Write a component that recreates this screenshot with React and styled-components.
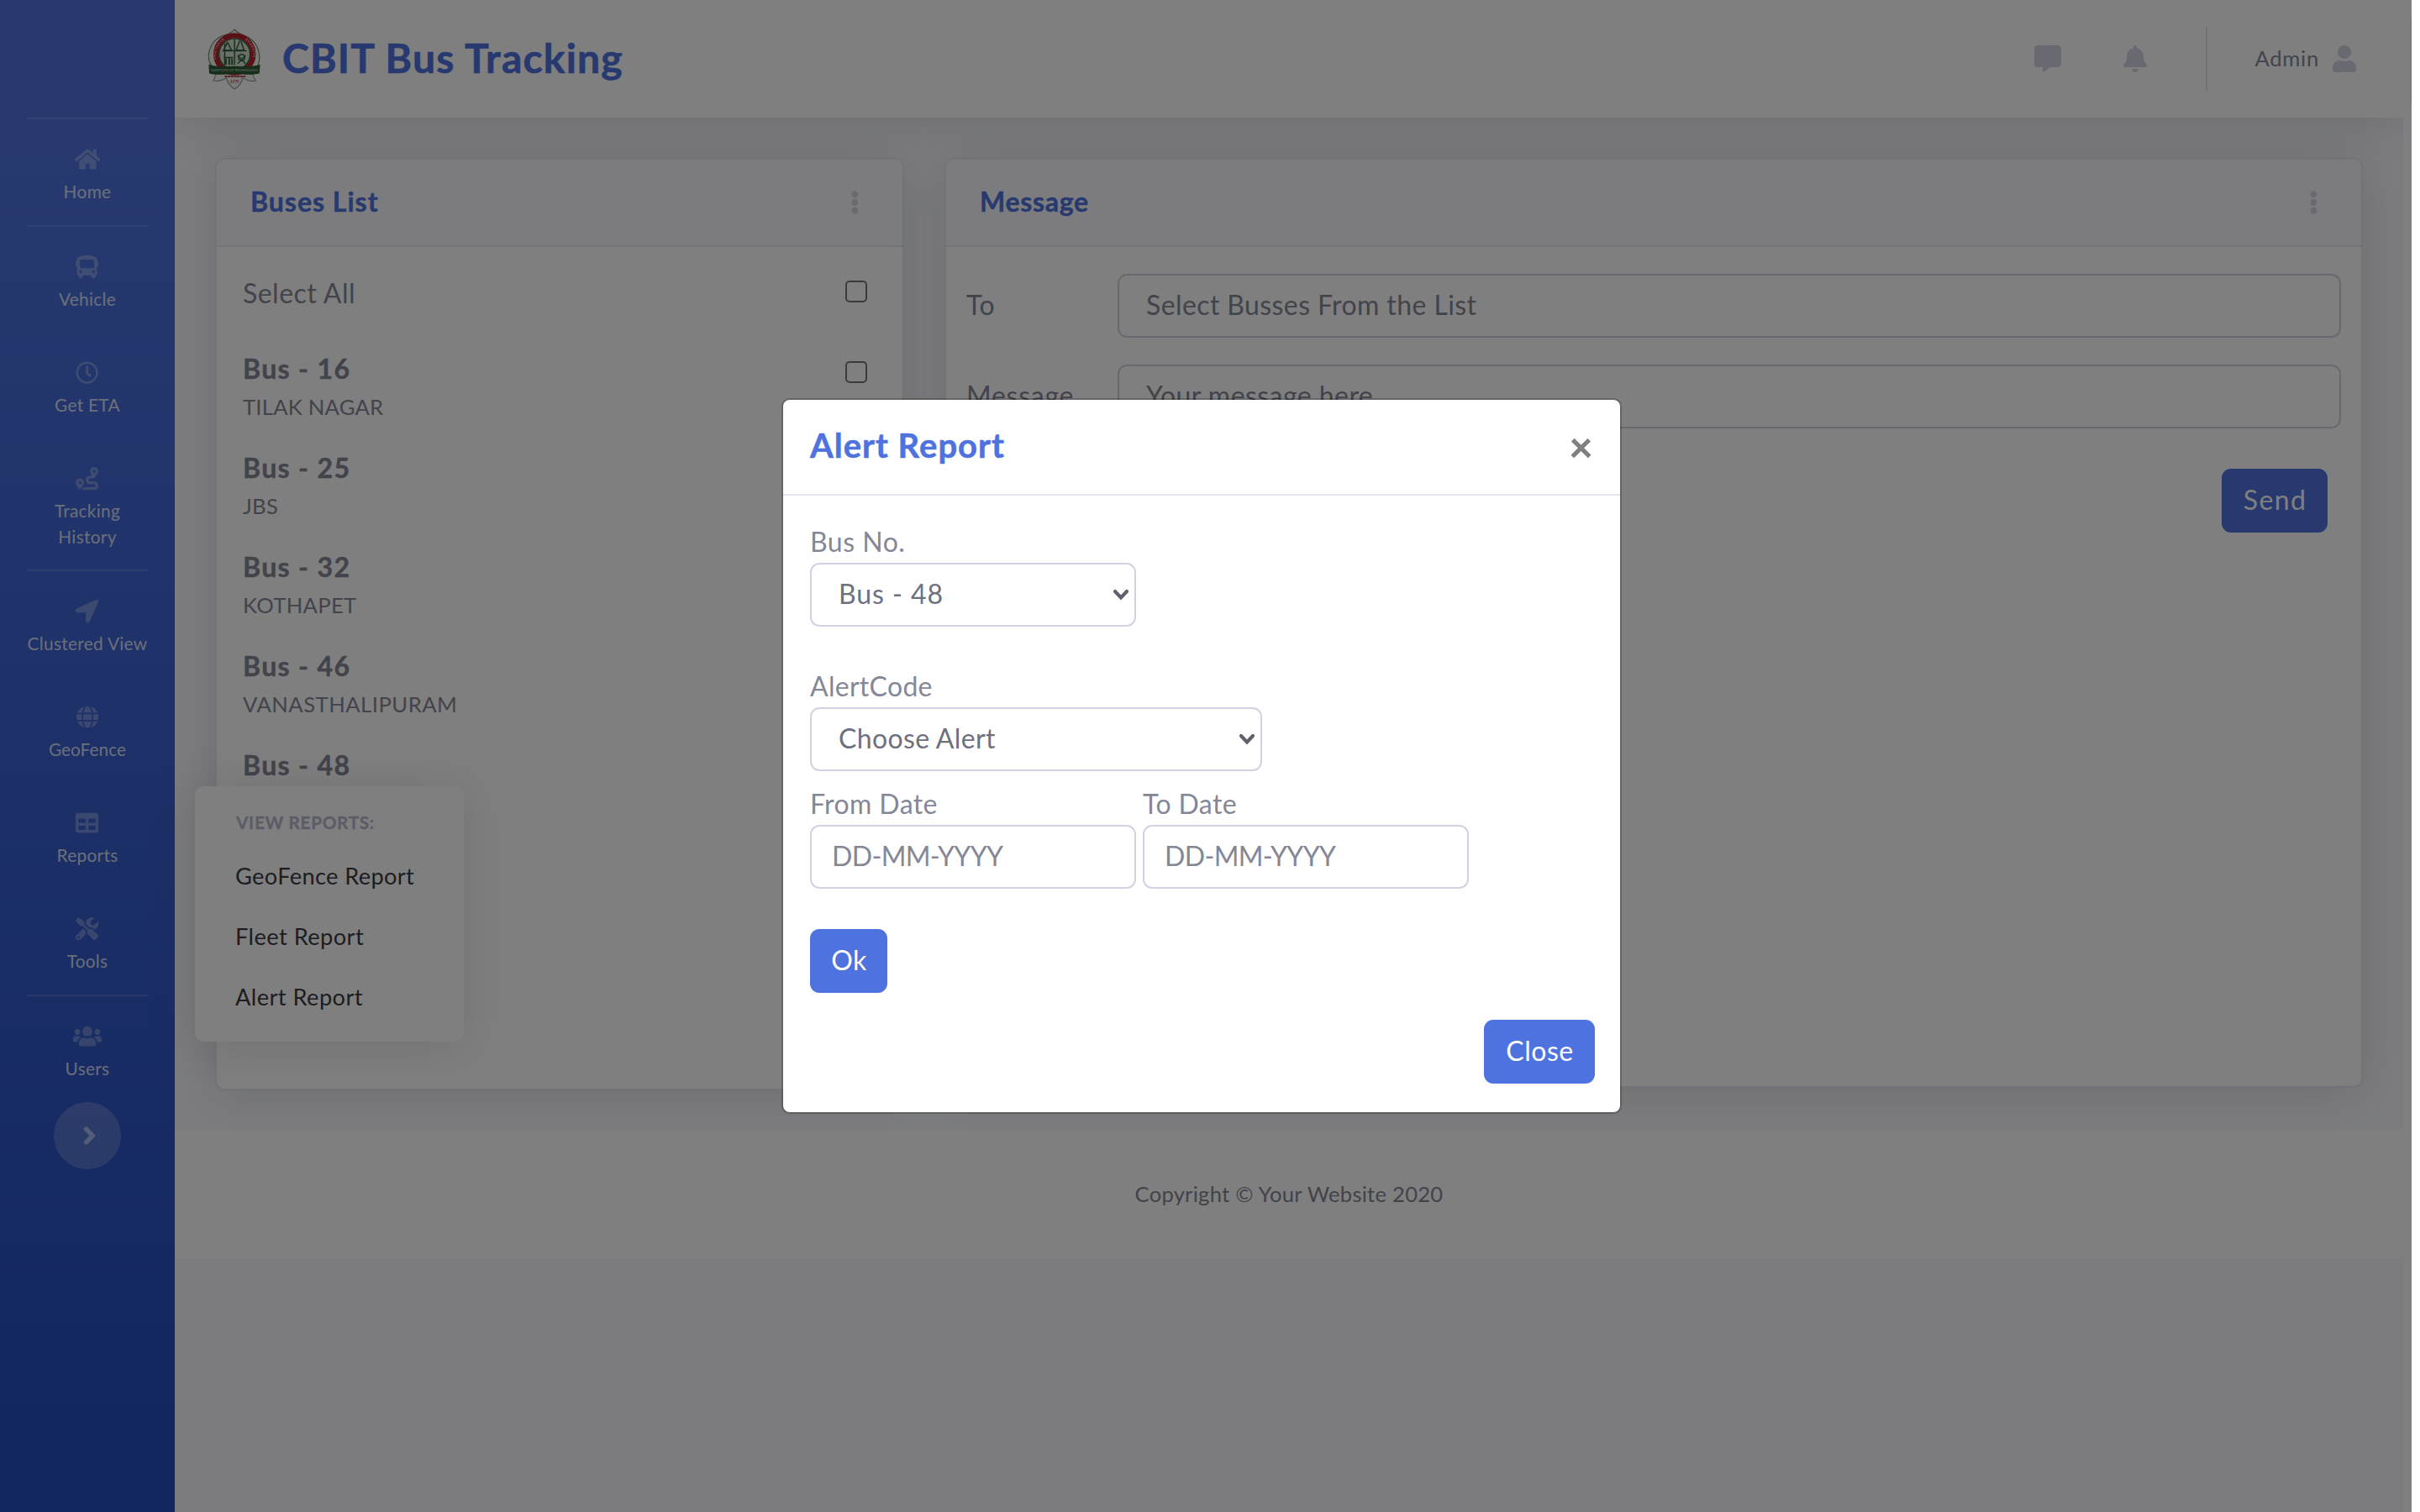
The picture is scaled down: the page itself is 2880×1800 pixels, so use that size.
import React from "react";
import styled, { createGlobalStyle } from "styled-components";
import {
  FaHome,
  FaBus,
  FaRegClock,
  FaRoute,
  FaLocationArrow,
  FaGlobe,
  FaTable,
  FaTools,
  FaUsers,
  FaAngleRight,
  FaCommentAlt,
  FaBell,
  FaUser,
  FaEllipsisV,
} from "react-icons/fa";

const color = {
  primary: "#4e73df",
  primaryDark: "#224abe",
  surface: "#f8f9fc",
  line: "#e3e6f0",
  field: "#d1d3e2",
  muted: "#b7b9cc",
  body: "#858796",
  strong: "#6e707e",
  ink: "#3a3b45",
};

const GlobalStyle = createGlobalStyle`
  *, *::before, *::after { box-sizing: border-box; }
  body {
    margin: 0;
    background: #fff;
    color: ${color.body};
    font-family: Lato, "Open Sans", sans-serif;
    font-size: 32px;
  }
`;

const Page = styled.div`
  position: relative;
  width: 2880px;
  height: 1800px;
  overflow: hidden;
  background: #fff;
`;

const Wrapper = styled.div`
  display: flex;
  width: 2860px;
  height: 100%;
`;

const Text = styled.span`
  padding-bottom: 0.07em;
  font-size: ${(p) => p.$size || 32}px;
  font-weight: ${(p) => (p.$bold ? 700 : 400)};
  letter-spacing: ${(p) => p.$track || 0}px;
  line-height: 1.2;
  white-space: nowrap;
  -webkit-text-stroke: ${(p) => (p.$bold ? "0.014em" : "0")} currentColor;
`;

/* Font Awesome glyphs are drawn on a 512-unit tall grid; $units is the glyph's width on it. */
const Glyph = styled.span`
  display: flex;
  font-size: ${(p) => p.$size}px;

  svg {
    width: ${(p) => (p.$units || 512) / 512}em;
    height: 1em;
  }
`;

/* ---------- sidebar ---------- */

const Sidebar = styled.nav`
  position: relative;
  z-index: 2;
  flex: none;
  display: flex;
  flex-direction: column;
  align-items: center;
  width: 208px;
  background: linear-gradient(180deg, ${color.primary} 10%, ${color.primaryDark} 100%);
`;

const Brand = styled.div`
  flex: none;
  height: 140px;
`;

const Divider = styled.div`
  flex: none;
  width: 144px;
  height: 2px;
  background: rgba(255, 255, 255, 0.15);
`;

const NavItem = styled.div`
  position: relative;
  flex: none;
  display: flex;
  flex-direction: column;
  align-items: center;
  width: 100%;
  padding: 24px 0 23px;
  color: rgba(255, 255, 255, 0.8);
`;

const NavIcon = styled.div`
  display: flex;
  align-items: center;
  height: 48px;
  color: rgba(255, 255, 255, 0.3);
`;

const NavLine = styled.div`
  display: flex;
  align-items: center;
  height: ${(p) => (p.$first ? 31 : 30)}px;
`;

const Toggle = styled.button`
  flex: none;
  display: flex;
  align-items: center;
  justify-content: center;
  width: 80px;
  height: 80px;
  padding: 0 0 0 4px;
  border: 0;
  border-radius: 50%;
  background: rgba(255, 255, 255, 0.2);
  color: rgba(255, 255, 255, 0.5);
`;

const Flyout = styled.div`
  position: absolute;
  top: 4px;
  left: 232px;
  width: 320px;
  padding: 16px 0;
  border-radius: 11.2px;
  background: #fff;
  box-shadow: 0 4.8px 56px rgba(58, 59, 69, 0.15);
`;

const FlyoutTitle = styled.div`
  display: flex;
  align-items: center;
  height: 56px;
  padding-left: 49px;
  color: ${color.muted};
`;

const FlyoutLink = styled.div`
  display: flex;
  align-items: center;
  height: 72px;
  padding-left: 48px;
  color: ${color.ink};
`;

/* ---------- content ---------- */

const Content = styled.div`
  flex: 1;
  display: flex;
  flex-direction: column;
  overflow: hidden;
  background: ${color.surface};
`;

const Topbar = styled.header`
  flex: none;
  display: flex;
  align-items: center;
  height: 140px;
  padding: 0 56px 0 37px;
  background: #fff;
  box-shadow: 0 4.8px 56px rgba(58, 59, 69, 0.15);
`;

const Title = styled.div`
  flex: 1;
  display: flex;
  margin: 1px 0 0 23px;
  color: ${color.primary};
`;

const TopIcon = styled.div`
  display: flex;
  justify-content: center;
  width: 104px;
  color: ${color.field};
`;

const TopSeparator = styled.div`
  width: 2px;
  height: 76px;
  margin: 0 56px 0 32px;
  background: ${color.line};
`;

const Account = styled.div`
  display: flex;
  align-items: center;
  gap: 16px;
`;

const AccountIcon = styled.div`
  color: ${color.field};
`;

const Main = styled.main`
  flex: none;
  display: flex;
  align-items: flex-start;
  gap: 48px;
  height: 1206px;
  padding: 48px 48px 0;
`;

const Card = styled.section`
  flex: ${(p) => (p.$width ? "none" : 1)};
  width: ${(p) => (p.$width ? `${p.$width}px` : "auto")};
  height: ${(p) => p.$height}px;
  border: 2px solid ${color.line};
  border-radius: 11.2px;
  background: #fff;
  box-shadow: 0 4.8px 56px rgba(58, 59, 69, 0.15);
`;

const CardHeader = styled.div`
  display: flex;
  align-items: center;
  justify-content: space-between;
  height: 104px;
  padding: 0 52px 0 40px;
  border-bottom: 2px solid ${color.line};
  border-radius: 9.2px 9.2px 0 0;
  background: ${color.surface};
  color: ${color.primary};
`;

const CardMenu = styled.div`
  color: ${color.field};
`;

const BusList = styled.div`
  display: flex;
  flex-direction: column;
  padding: 32px 42px 0 31px;
`;

const SelectAllRow = styled.div`
  display: flex;
  align-items: center;
  justify-content: space-between;
  height: 48px;
  margin-bottom: 42px;
`;

const BusRow = styled.div`
  display: flex;
  justify-content: space-between;
  height: 118px;
`;

const BusName = styled.div`
  display: flex;
  align-items: center;
  height: 48px;
`;

const BusStop = styled.div`
  display: flex;
  align-items: center;
  height: 43px;
`;

const Checkbox = styled.input.attrs({ type: "checkbox" })`
  appearance: none;
  flex: none;
  width: 26px;
  height: 26px;
  margin: ${(p) => (p.$listed ? "14px 0 0" : "0 0 6px")};
  border: 2px solid #767676;
  border-radius: 5px;
  background: #fff;
`;

const MessageForm = styled.div`
  display: grid;
  grid-template-columns: 180px 1fr;
  row-gap: 32px;
  padding: 32px 24px 0;
`;

const FieldLabel = styled.label`
  display: flex;
  align-items: center;
  height: ${(p) => p.$height || 76}px;
`;

const Input = styled.input`
  width: ${(p) => (p.$width ? `${p.$width}px` : "100%")};
  height: 76px;
  padding: 0 24px 3px ${(p) => p.$inset || 32}px;
  border: 2px solid ${color.field};
  border-radius: 11.2px;
  background: #fff;
  color: ${color.strong};
  font-family: inherit;
  font-size: 32px;
  letter-spacing: ${(p) => p.$track || 0}px;

  &::placeholder {
    color: ${color.body};
    opacity: 1;
  }
`;

const Button = styled.button`
  display: flex;
  align-items: center;
  justify-content: center;
  width: ${(p) => p.$width}px;
  height: 76px;
  padding: 0 0 0 1px;
  border: 0;
  border-radius: 11.2px;
  background: ${color.primary};
  color: #fff;
  font-family: inherit;
`;

const SendRow = styled.div`
  display: flex;
  justify-content: flex-end;
  padding: 48px 40px 0;
`;

const Footer = styled.footer`
  flex: none;
  display: flex;
  align-items: center;
  justify-content: center;
  height: 152px;
  background: #fff;
`;

/* ---------- modal ---------- */

const Backdrop = styled.div`
  position: absolute;
  inset: 0 10px 0 0;
  z-index: 3;
  display: flex;
  align-items: flex-start;
  justify-content: center;
  padding: 474px 10px 0 0;
  background: rgba(0, 0, 0, 0.5);
`;

const EdgeTab = styled.div`
  position: absolute;
  top: 23px;
  right: 10px;
  z-index: 4;
  width: 1px;
  height: 98px;
  background: #7e6a6e;
`;

const Dialog = styled.div`
  display: flex;
  flex-direction: column;
  width: 1000px;
  height: 852px;
  border: 2px solid rgba(0, 0, 0, 0.2);
  border-radius: 9.6px;
  background: #fff;
  background-clip: padding-box;
`;

const DialogHeader = styled.div`
  display: flex;
  align-items: flex-start;
  justify-content: space-between;
  height: 114px;
  padding: 30px 32px 0 32px;
  border-bottom: 2px solid ${color.line};
  color: ${color.primary};
`;

const Dismiss = styled.span`
  margin-top: 1px;
  color: #808080;
  font-size: 50px;
  font-weight: 900;
  line-height: 48px;
`;

const DialogBody = styled.div`
  display: flex;
  flex-direction: column;
  align-items: flex-start;
  padding: 32px 32px 0;
`;

const Field = styled.div`
  display: flex;
  flex-direction: column;
  margin-bottom: ${(p) => p.$gap || 0}px;
`;

const DateRow = styled.div`
  display: flex;
  gap: 8px;
  margin-bottom: 48px;
`;

const SelectBox = styled.div`
  display: flex;
  align-items: center;
  justify-content: space-between;
  width: ${(p) => p.$width}px;
  height: 76px;
  padding: 0 6px 0 32px;
  border: 2px solid ${color.field};
  border-radius: 11.2px;
  color: ${color.strong};
`;

const DialogFooter = styled.div`
  display: flex;
  justify-content: flex-end;
  padding: 32px 30px 0;
`;

const Chevron = () => (
  <svg width="20" height="14" viewBox="0 0 20 14" fill="none">
    <path d="M3 3l7 7.5L17 3" stroke="#5f616e" strokeWidth="4.2" strokeLinecap="round" strokeLinejoin="miter" />
  </svg>
);

const Emblem = () => (
  <svg width="68" height="74" viewBox="45 40 203 221">
    <g fill="#f4f4f0" stroke="#5c7a58" strokeWidth="3">
      <path d="M147 46c10 14 26 18 40 24 24 11 44 34 48 66 3 24-6 42-14 52H73c-8-10-21-28-18-54 4-30 22-54 46-64 18-6 36-10 46-24z" />
      <path d="M84 190c-4 16-6 26-12 38 18 4 34-2 46-10 4 20 16 32 29 40 13-8 25-20 29-40 12 8 30 14 46 10-8-12-12-24-14-38z" stroke="#8b9488" />
    </g>
    <circle cx="147" cy="134" r="66" fill="#fbfbf8" stroke="#b5222b" strokeWidth="19" />
    <circle cx="147" cy="134" r="55" fill="#d5dfd0" stroke="#2f6338" strokeWidth="4" />
    <g fill="none" stroke="#2f6338" strokeWidth="4.5">
      <path d="M112 96v76M122 92l-14 28h28l-14-28M147 82v90M104 122h86M165 86l-12 34h28l-12-34M108 146h34M158 138l28 30M186 138l-28 30" />
      <circle cx="172" cy="146" r="11" />
      <path d="M116 150v22M128 146v26M138 150v22" strokeWidth="6" />
    </g>
    <path id="emblemArc" d="M84 158a66 66 0 1 1 126 0" fill="none" />
    <text fontSize="12" fontWeight="700" fill="#e8c8c8" letterSpacing="1.5">
      <textPath href="#emblemArc" startOffset="2%">CHAITANYA</textPath>
    </text>
    <text fontSize="12" fontWeight="700" fill="#e8c8c8" letterSpacing="1.5">
      <textPath href="#emblemArc" startOffset="66%">BHARATHI</textPath>
    </text>
    <path d="M55 171c30 10 62 6 92 6s62 4 91-6l-3 32c-30 7-58 2-88 2s-60 5-90-2z" fill="#2c5a33" />
    <text x="147" y="195" fontSize="13" fontWeight="700" fill="#a9b9a4" textAnchor="middle" textLength="168">
      INSTITUTE OF TECHNOLOGY
    </text>
    <path d="M112 213h74" stroke="#b03a40" strokeWidth="6" strokeDasharray="9 2" />
    <text x="147" y="236" fontSize="14" fontWeight="700" fill="#b8545a" textAnchor="middle">
      1979
    </text>
  </svg>
);

const NavEntry = ({ icon: Icon, units, lines, track, children }) => (
  <NavItem>
    <NavIcon>
      <Glyph $size={27.2} $units={units}>
        <Icon />
      </Glyph>
    </NavIcon>
    {lines.map((line, i) => (
      <NavLine key={line} $first={i === 0}>
        <Text $size={20.8} $track={track}>
          {line}
        </Text>
      </NavLine>
    ))}
    {children}
  </NavItem>
);

const CardTitle = ({ track, children }) => (
  <CardHeader>
    <Text $bold $track={track}>
      {children}
    </Text>
    <CardMenu>
      <Glyph $size={28} $units={192}>
        <FaEllipsisV />
      </Glyph>
    </CardMenu>
  </CardHeader>
);

const buses = [
  { name: "Bus - 16", stop: "TILAK NAGAR", track: 0.25 },
  { name: "Bus - 25", stop: "JBS", track: 0.3 },
  { name: "Bus - 32", stop: "KOTHAPET", track: 0.34 },
  { name: "Bus - 46", stop: "VANASTHALIPURAM", track: 0.51 },
  { name: "Bus - 48" },
];

export default function App() {
  return (
    <Page>
      <GlobalStyle />
      <Wrapper>
        <Sidebar>
          <Brand />
          <Divider />
          <NavEntry icon={FaHome} units={576} lines={["Home"]} track={0.35} />
          <Divider />
          <NavEntry icon={FaBus} lines={["Vehicle"]} track={0.3} />
          <NavEntry icon={FaRegClock} lines={["Get ETA"]} track={0.3} />
          <NavEntry icon={FaRoute} lines={["Tracking", "History"]} track={0.3} />
          <Divider />
          <NavEntry icon={FaLocationArrow} lines={["Clustered View"]} track={0.32} />
          <NavEntry icon={FaGlobe} units={496} lines={["GeoFence"]} track={0.04} />
          <NavEntry icon={FaTable} lines={["Reports"]} track={0.3}>
            <Flyout>
              <FlyoutTitle>
                <Text $size={20.8} $bold $track={0.64}>
                  VIEW REPORTS:
                </Text>
              </FlyoutTitle>
              <FlyoutLink>
                <Text $size={27.2} $track={0.37}>
                  GeoFence Report
                </Text>
              </FlyoutLink>
              <FlyoutLink>
                <Text $size={27.2} $track={0.46}>
                  Fleet Report
                </Text>
              </FlyoutLink>
              <FlyoutLink>
                <Text $size={27.2} $track={0.46}>
                  Alert Report
                </Text>
              </FlyoutLink>
            </Flyout>
          </NavEntry>
          <NavEntry icon={FaTools} lines={["Tools"]} track={0.3} />
          <Divider />
          <NavEntry icon={FaUsers} units={640} lines={["Users"]} track={0.3} />
          <Toggle>
            <Glyph $size={34} $units={256}>
              <FaAngleRight />
            </Glyph>
          </Toggle>
        </Sidebar>

        <Content>
          <Topbar>
            <Emblem />
            <Title>
              <Text $size={48} $bold $track={1.2}>
                CBIT Bus Tracking
              </Text>
            </Title>
            <TopIcon>
              <Glyph $size={32}>
                <FaCommentAlt />
              </Glyph>
            </TopIcon>
            <TopIcon>
              <Glyph $size={32} $units={448}>
                <FaBell />
              </Glyph>
            </TopIcon>
            <TopSeparator />
            <Account>
              <Text $size={25.6} $track={0.73}>
                Admin
              </Text>
              <AccountIcon>
                <Glyph $size={32} $units={448}>
                  <FaUser />
                </Glyph>
              </AccountIcon>
            </Account>
          </Topbar>

          <Main>
            <Card $width={820} $height={1110}>
              <CardTitle track={1.0}>Buses List</CardTitle>
              <BusList>
                <SelectAllRow>
                  <Text $track={0.48}>Select All</Text>
                  <Checkbox />
                </SelectAllRow>
                {buses.map((bus) => (
                  <BusRow key={bus.name}>
                    <div>
                      <BusName>
                        <Text $bold $track={1.35}>
                          {bus.name}
                        </Text>
                      </BusName>
                      {bus.stop && (
                        <BusStop>
                          <Text $size={25.6} $track={bus.track}>
                            {bus.stop}
                          </Text>
                        </BusStop>
                      )}
                    </div>
                    <Checkbox $listed />
                  </BusRow>
                ))}
              </BusList>
            </Card>

            <Card $height={1107}>
              <CardTitle track={0.7}>Message</CardTitle>
              <MessageForm>
                <FieldLabel>
                  <Text $track={0.5}>To</Text>
                </FieldLabel>
                <Input placeholder="Select Busses From the List" $track={0.4} />
                <FieldLabel>
                  <Text $track={0.75}>Message</Text>
                </FieldLabel>
                <Input placeholder="Your message here" $track={0.45} />
              </MessageForm>
              <SendRow>
                <Button $width={126}>
                  <Text $track={1.4}>Send</Text>
                </Button>
              </SendRow>
            </Card>
          </Main>

          <Footer>
            <Text $size={25.6} $track={0.25}>
              Copyright © Your Website 2020
            </Text>
          </Footer>
        </Content>
      </Wrapper>

      <EdgeTab />
      <Backdrop>
        <Dialog>
          <DialogHeader>
            <Text $size={40} $bold $track={1.01}>
              Alert Report
            </Text>
            <Dismiss>×</Dismiss>
          </DialogHeader>
          <DialogBody>
            <Field $gap={48}>
              <FieldLabel $height={48}>
                <Text $track={0.5}>Bus No.</Text>
              </FieldLabel>
              <SelectBox $width={388}>
                <Text $track={0.95}>Bus - 48</Text>
                <Chevron />
              </SelectBox>
            </Field>
            <Field $gap={16}>
              <FieldLabel $height={48}>
                <Text $track={0.29}>AlertCode</Text>
              </FieldLabel>
              <SelectBox $width={538}>
                <Text $track={0.35}>Choose Alert</Text>
                <Chevron />
              </SelectBox>
            </Field>
            <DateRow>
              <Field>
                <FieldLabel $height={48}>
                  <Text $track={0.4}>From Date</Text>
                </FieldLabel>
                <Input placeholder="DD-MM-YYYY" $width={388} $inset={24} $track={-0.63} />
              </Field>
              <Field>
                <FieldLabel $height={48}>
                  <Text $track={0.4}>To Date</Text>
                </FieldLabel>
                <Input placeholder="DD-MM-YYYY" $width={388} $inset={24} $track={-0.63} />
              </Field>
            </DateRow>
            <Button $width={92}>
              <Text $track={0.5}>Ok</Text>
            </Button>
          </DialogBody>
          <DialogFooter>
            <Button $width={132}>
              <Text $track={0.52}>Close</Text>
            </Button>
          </DialogFooter>
        </Dialog>
      </Backdrop>
    </Page>
  );
}
